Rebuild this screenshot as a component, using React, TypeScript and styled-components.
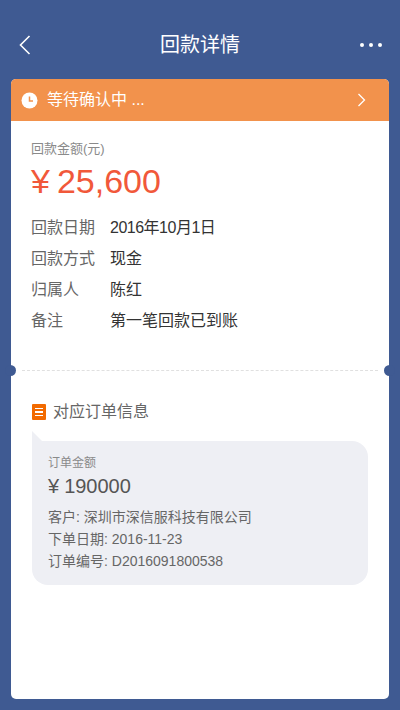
import React from "react";
import styled, { createGlobalStyle } from "styled-components";

const GlobalStyle = createGlobalStyle`
  html, body {
    margin: 0;
    padding: 0;
    background: #3f5a92;
  }
  * {
    box-sizing: border-box;
  }
`;

const Page = styled.div`
  width: 400px;
  height: 710px;
  display: flex;
  flex-direction: column;
  padding: 0 11px 11px;
  background: #3f5a92;
  overflow: hidden;
  font-family: "Liberation Sans", "Noto Sans CJK SC", sans-serif;
`;

const NavBar = styled.div`
  height: 79px;
  flex: none;
  display: flex;
  align-items: center;
  justify-content: space-between;
  padding: 10px 6px 0 2px;
`;

const NavTitle = styled.span`
  padding-left: 4px;
  font-size: 20px;
  line-height: 28px;
  color: #fff;
`;

const NavButton = styled.div`
  width: 24px;
  height: 24px;
  display: flex;
  align-items: center;
  justify-content: center;
`;

const Card = styled.div`
  flex: 1;
  display: flex;
  flex-direction: column;
  background: #fff;
  border-radius: 5px;
`;

const StatusBar = styled.div`
  height: 42px;
  flex: none;
  display: flex;
  align-items: center;
  gap: 9px;
  padding: 0 23px 0 10px;
  background: #f2924c;
  border-radius: 5px 5px 0 0;
  color: #fff;
`;

const StatusText = styled.span`
  flex: 1;
  font-size: 16px;
  line-height: 20px;
`;

const Summary = styled.div`
  height: 249px;
  flex: none;
  padding: 19px 20px 0;
`;

const SmallLabel = styled.div<{ $size: number }>`
  font-size: ${({ $size }) => $size}px;
  line-height: 18px;
  color: #8a8a8a;
`;

const Amount = styled.div`
  margin-top: 3px;
  display: flex;
  font-size: 34px;
  line-height: 40px;
  color: #f1583a;
`;

const Yen = styled.span<{ $gap: number }>`
  margin-right: ${({ $gap }) => $gap}px;
`;

const Rows = styled.div`
  margin-top: 15px;
  display: flex;
  flex-direction: column;
  gap: 8px;
`;

const Row = styled.div`
  display: flex;
  font-size: 16px;
  line-height: 23px;
`;

const RowLabel = styled.span`
  width: 79px;
  flex: none;
  color: #666;
`;

const RowValue = styled.span<{ $tight?: boolean }>`
  color: #333;
  letter-spacing: ${({ $tight }) => ($tight ? "-0.5px" : "0")};
`;

const Divider = styled.div`
  position: relative;
  height: 1px;
  flex: none;
  margin: 0 11px;
  border-top: 1px dashed #e0e0e0;
`;

const Notch = styled.span<{ $side: "left" | "right" }>`
  position: absolute;
  top: -6px;
  ${({ $side }) => ($side === "left" ? "left: -17px;" : "right: -17px;")}
  width: 11px;
  height: 11px;
  border-radius: 50%;
  background: #3f5a92;
`;

const OrderSection = styled.div`
  padding: 30px 21px 0;
`;

const SectionHead = styled.div`
  display: flex;
  align-items: center;
  gap: 7px;
`;

const SectionIcon = styled.div`
  width: 14px;
  height: 16px;
  flex: none;
  display: flex;
  flex-direction: column;
  justify-content: center;
  align-items: center;
  gap: 2px;
  background: #f26a00;
  border-radius: 1px;
`;

const IconLine = styled.span`
  width: 8px;
  height: 1.5px;
  background: #fff;
`;

const SectionTitle = styled.span`
  font-size: 16px;
  line-height: 22px;
  color: #666;
`;

const Bubble = styled.div`
  position: relative;
  margin-top: 18px;
  height: 144px;
  padding: 13px 16px 0;
  background: #eeeff4;
  border-radius: 0 16px 16px 16px;

  &::before {
    content: "";
    position: absolute;
    left: 0;
    top: -10px;
    width: 11px;
    height: 11px;
    background: #eeeff4;
    clip-path: polygon(0 0, 100% 100%, 0 100%);
  }
`;

const OrderAmount = styled.div`
  display: flex;
  font-size: 20px;
  line-height: 28px;
  color: #555;
`;

const OrderLines = styled.div`
  margin-top: 7px;
  display: flex;
  flex-direction: column;
  gap: 2px;
`;

const OrderLine = styled.div`
  font-size: 14px;
  line-height: 20px;
  color: #666;
`;

const details = [
  { label: "回款日期", value: "2016年10月1日", tight: true },
  { label: "回款方式", value: "现金" },
  { label: "归属人", value: "陈红" },
  { label: "备注", value: "第一笔回款已到账" },
];

const orderLines = [
  "客户: 深圳市深信服科技有限公司",
  "下单日期: 2016-11-23",
  "订单编号: D2016091800538",
];

const App: React.FC = () => {
  return (
    <>
      <GlobalStyle />
      <Page>
        <NavBar>
          <NavButton>
            <svg width="12" height="20" viewBox="0 0 12 20" fill="none">
              <path d="M10.5 1 L1.5 10 L10.5 19" stroke="#fff" strokeWidth="1.6" />
            </svg>
          </NavButton>
          <NavTitle>回款详情</NavTitle>
          <NavButton>
            <svg width="24" height="6" viewBox="0 0 24 6" fill="#fff">
              <circle cx="3" cy="3" r="2" />
              <circle cx="12" cy="3" r="2" />
              <circle cx="21" cy="3" r="2" />
            </svg>
          </NavButton>
        </NavBar>
        <Card>
          <StatusBar>
            <svg width="17" height="17" viewBox="0 0 17 17">
              <circle cx="8.5" cy="8.5" r="8" fill="#fff" />
              <path d="M8.5 4.5 V9 H12" fill="none" stroke="#f2924c" strokeWidth="1.5" />
            </svg>
            <StatusText>等待确认中 ...</StatusText>
            <svg width="9" height="14" viewBox="0 0 9 14" fill="none">
              <path d="M1.5 1 L7.5 7 L1.5 13" stroke="#fff" strokeWidth="1.3" />
            </svg>
          </StatusBar>
          <Summary>
            <SmallLabel $size={13}>回款金额(元)</SmallLabel>
            <Amount>
              <Yen $gap={7}>¥</Yen>25,600
            </Amount>
            <Rows>
              {details.map((d) => (
                <Row key={d.label}>
                  <RowLabel>{d.label}</RowLabel>
                  <RowValue $tight={d.tight}>{d.value}</RowValue>
                </Row>
              ))}
            </Rows>
          </Summary>
          <Divider>
            <Notch $side="left" />
            <Notch $side="right" />
          </Divider>
          <OrderSection>
            <SectionHead>
              <SectionIcon>
                <IconLine />
                <IconLine />
                <IconLine />
              </SectionIcon>
              <SectionTitle>对应订单信息</SectionTitle>
            </SectionHead>
            <Bubble>
              <SmallLabel $size={12}>订单金额</SmallLabel>
              <OrderAmount>
                <Yen $gap={5}>¥</Yen>190000
              </OrderAmount>
              <OrderLines>
                {orderLines.map((l) => (
                  <OrderLine key={l}>{l}</OrderLine>
                ))}
              </OrderLines>
            </Bubble>
          </OrderSection>
        </Card>
      </Page>
    </>
  );
};

export default App;
